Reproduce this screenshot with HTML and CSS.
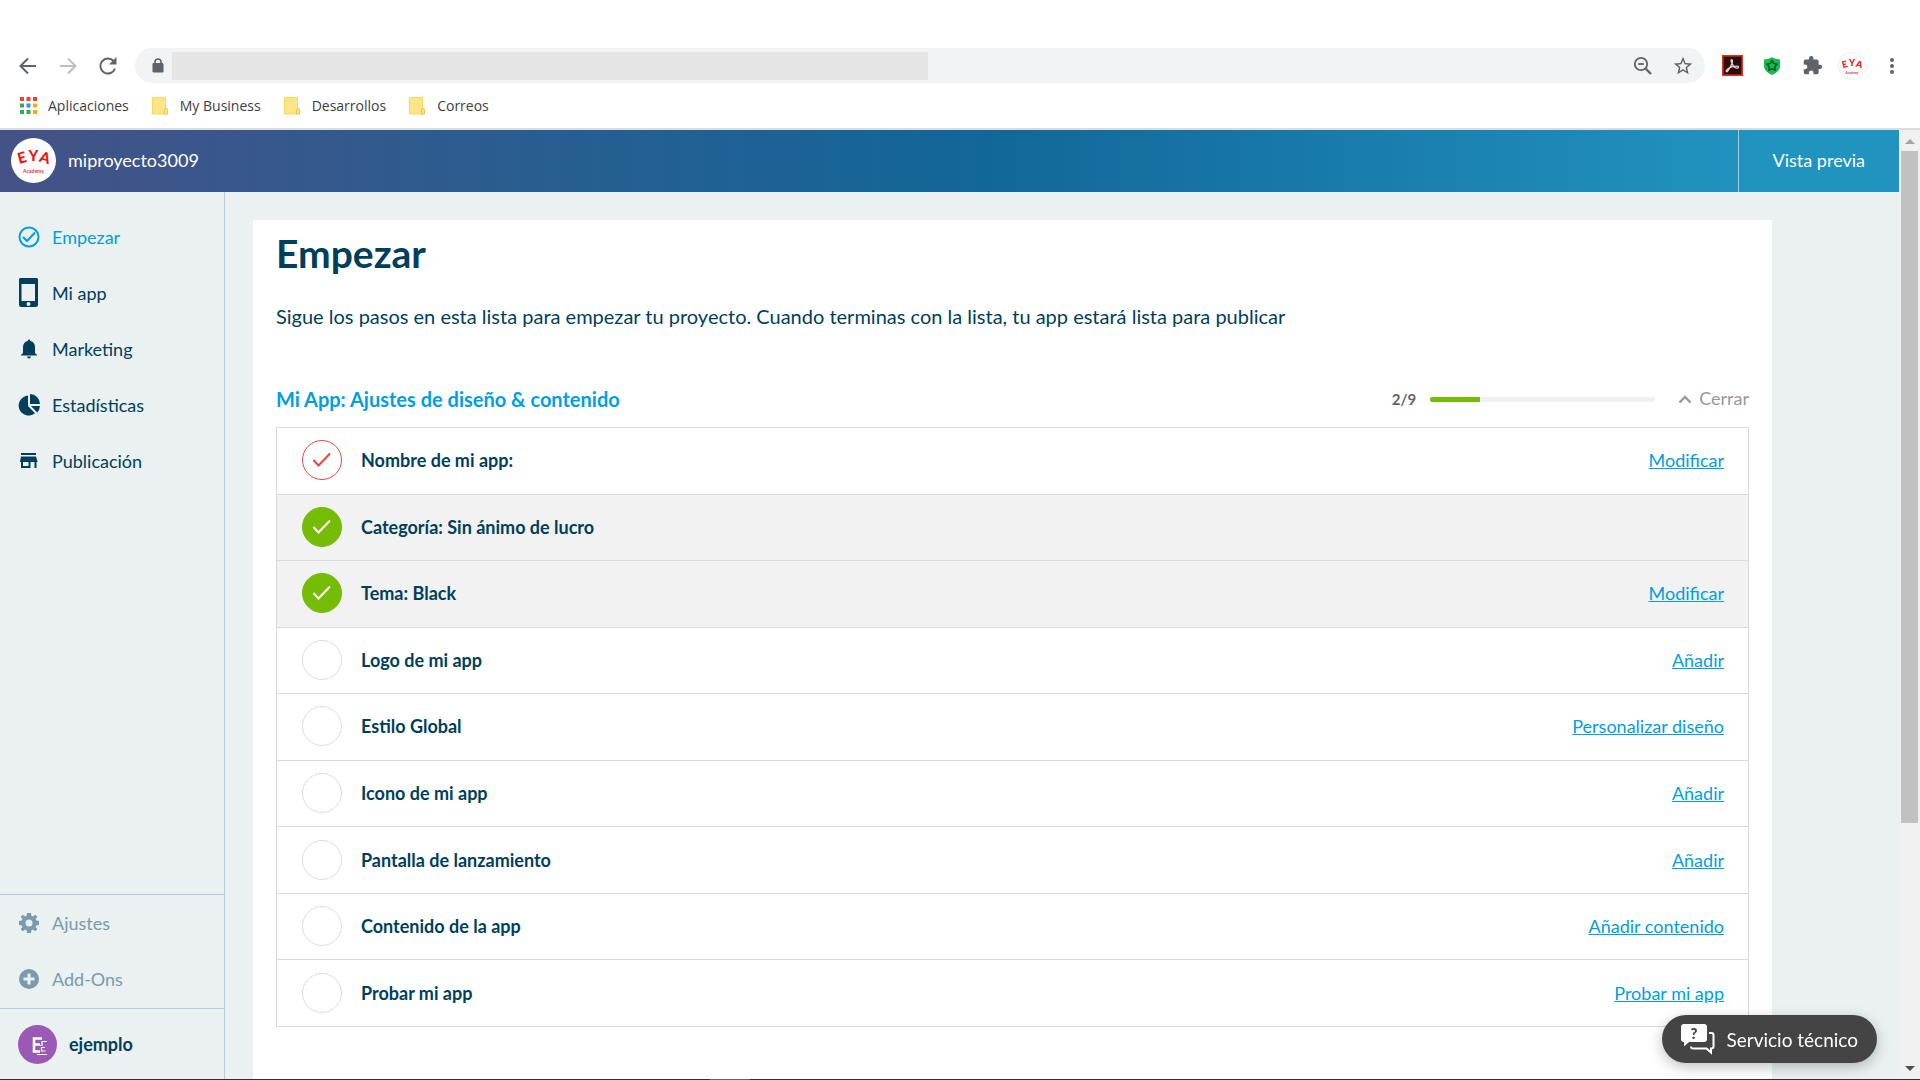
FILE: index.html
```html
<!DOCTYPE html>
<html lang="es">
<head>
<meta charset="utf-8">
<meta name="viewport" content="width=device-width, initial-scale=1">
<title>Empezar</title>
<link rel="stylesheet" href="styles.css">
</head>
<body>
<header class="browser">
  <div class="toolbar">
    <button class="tool" aria-label="Atrás"><svg width="20" height="20" viewBox="0 0 20 20" fill="none" stroke="#5f6368" stroke-width="2"><path d="M18 10H3M10 2.500L2.500 10l7.500 7.500"/></svg></button>
    <button class="tool" aria-label="Adelante"><svg width="20" height="20" viewBox="0 0 20 20" fill="none" stroke="#bdbfc1" stroke-width="2"><path d="M2 10h15M10 2.500L17.500 10 10 17.500"/></svg></button>
    <button class="tool" aria-label="Recargar"><svg width="20" height="20" viewBox="0 0 20 20"><path d="M17 12.500A7.500 7.500 0 1 1 15.500 5" fill="none" stroke="#5f6368" stroke-width="2"/><path d="M18.500 1v7.500H11z" fill="#5f6368"/></svg></button>
    <div class="omnibox">
      <svg class="lock" width="12" height="15" viewBox="0 0 12 15"><rect x="0.500" y="5" width="11" height="9.500" rx="1.200" fill="#5f6368"/><path d="M3 6V4a3 3 0 0 1 6 0v2" fill="none" stroke="#5f6368" stroke-width="1.600"/></svg>
      <input class="url" type="text" aria-label="Dirección">
      <button class="tool push" aria-label="Zoom"><svg width="20" height="20" viewBox="0 0 20 20" fill="none" stroke="#5f6368" stroke-width="1.800"><circle cx="8" cy="8" r="6.200"/><path d="M12.500 12.500L18 18" stroke-width="2.400"/><path d="M5.200 8h5.600"/></svg></button>
      <button class="tool" aria-label="Añadir a marcadores"><svg width="22" height="22" viewBox="0 0 24 24"><path fill="#5f6368" d="M22 9.240l-7.190-.620L12 2 9.190 8.630 2 9.240l5.460 4.730L5.820 21 12 17.270 18.180 21l-1.630-7.030L22 9.240zM12 15.400l-3.760 2.270 1-4.280-3.320-2.880 4.380-.380L12 6.100l1.710 4.040 4.380.380-3.320 2.880 1 4.280L12 15.400z"/></svg></button>
    </div>
    <button class="tool" aria-label="Acrobat"><svg width="21" height="21" viewBox="0 0 21 21"><rect x="0.800" y="0.800" width="19.400" height="19.400" fill="#2b0b0b" stroke="#e3321c" stroke-width="1.600"/><path d="M9.500 4.500c1.500 0 .9 2.500.6 4 .8 2.500 2.400 4 4 4.500 1.600.3 2.600-.3 2.500-1.200-.3-1.300-5-.5-7.500.3-2 .8-4.500 2.500-5 4-.1 1 1 1 2-.5 1.500-2.200 3.200-5.200 3.900-7.300C9 6.500 8.600 4.800 9.500 4.500z" fill="none" stroke="#ded8d6" stroke-width="1.200"/></svg></button>
    <button class="tool" aria-label="Protección"><svg width="16" height="18" viewBox="0 0 16 18"><path d="M0 2.500Q5 2 8 .3 11 2 16 2.500V10q-.5 4.500-8 8-7.500-3.500-8-8z" fill="#0fbf4f"/><path d="M8 3.500l1.700 3 3.300.7-2.200 2.500.3 3.400L8 11.800l-3.100 1.300.3-3.400L3 7.200l3.300-.7z" fill="none" stroke="#11442b" stroke-width="1.400"/></svg></button>
    <button class="tool" aria-label="Extensiones"><svg width="21" height="21" viewBox="0 0 24 24"><path fill="#5f6368" d="M20.500 11H19V7c0-1.100-.9-2-2-2h-4V3.500a2.500 2.500 0 0 0-5 0V5H4c-1.100 0-2 .9-2 2v3.800h1.500a2.700 2.700 0 0 1 0 5.400H2V20c0 1.100.9 2 2 2h3.800v-1.500a2.700 2.700 0 0 1 5.400 0V22H17c1.100 0 2-.9 2-2v-4h1.500a2.500 2.500 0 0 0 0-5z"/></svg></button>
    <button class="tool" aria-label="Perfil"><svg width="28" height="28" viewBox="0 0 45 45"><circle cx="22.500" cy="22.500" r="22" fill="#fff" stroke="#e4e4e4"/><g class="logo-letters"><text x="11" y="25" transform="rotate(-16 11 20)">E</text><text x="22.500" y="23">Y</text><text x="34" y="25" transform="rotate(16 34 20)">A</text></g><text class="logo-sub" x="22.500" y="35">Academy</text></svg></button>
    <button class="tool" aria-label="Menú"><svg width="6" height="18" viewBox="0 0 6 18" fill="#5f6368"><circle cx="3" cy="3" r="2"/><circle cx="3" cy="9" r="2"/><circle cx="3" cy="15" r="2"/></svg></button>
  </div>
  <nav class="bookmarks" aria-label="Marcadores">
    <a href="#"><svg width="17" height="17" viewBox="0 0 17 17"><path fill="#f04336" d="M0 0h4v4H0zM6.500 0h4v4h-4zM13 0h4v4h-4z"/><path fill="#34a853" d="M0 6.500h4v4H0zM0 13h4v4H0zM6.500 13h4v4h-4z"/><path fill="#2a94f4" d="M6.500 6.500h4v4h-4z"/><path fill="#fbab07" d="M13 6.500h4v4h-4zM13 13h4v4h-4z"/></svg>Aplicaciones</a>
    <a href="#"><svg width="17" height="18" viewBox="0 0 17 18"><path d="M.5.500h13v11h1.500v5.500H.5z" fill="#ffe48a" stroke="#fbd75b"/><path d="M12.500 17v-4q0-1.500 1.500-1.500t1.500 1.500v4z" fill="#ffe48a" stroke="#efc64a"/></svg>My Business</a>
    <a href="#"><svg width="17" height="18" viewBox="0 0 17 18"><path d="M.5.500h13v11h1.500v5.500H.5z" fill="#ffe48a" stroke="#fbd75b"/><path d="M12.500 17v-4q0-1.500 1.500-1.500t1.500 1.500v4z" fill="#ffe48a" stroke="#efc64a"/></svg>Desarrollos</a>
    <a href="#"><svg width="17" height="18" viewBox="0 0 17 18"><path d="M.5.500h13v11h1.500v5.500H.5z" fill="#ffe48a" stroke="#fbd75b"/><path d="M12.500 17v-4q0-1.500 1.500-1.500t1.500 1.500v4z" fill="#ffe48a" stroke="#efc64a"/></svg>Correos</a>
  </nav>
</header>

<div class="viewport">
  <div class="page">
    <header class="appbar">
      <svg class="logo" width="45" height="45" viewBox="0 0 45 45"><circle cx="22.500" cy="22.500" r="22.500" fill="#fff"/><g class="logo-letters"><text x="11" y="25" transform="rotate(-16 11 20)">E</text><text x="22.500" y="23">Y</text><text x="34" y="25" transform="rotate(16 34 20)">A</text></g><text class="logo-sub" x="22.500" y="35">Academy</text></svg>
      <span class="project">miproyecto3009</span>
      <a class="preview" href="#">Vista previa</a>
    </header>
    <div class="workspace">
      <aside class="sidebar">
        <nav class="menu">
          <a class="active" href="#"><svg width="22" height="22" viewBox="0 0 22 22" fill="none" stroke="currentColor" stroke-width="2"><circle cx="11" cy="11" r="9.500"/><path d="M5 11l4 4 8-8.500"/></svg>Empezar</a>
          <a href="#"><svg width="20" height="30" viewBox="0 0 20 30"><path fill="currentColor" fill-rule="evenodd" d="M2.500 0h14A2 2 0 0 1 19 2.500v24a2.500 2.500 0 0 1-2.500 2.500h-14A2.500 2.500 0 0 1 0 26.500v-24A2 2 0 0 1 2.500 0zM2.500 6v17h13.500V6zM9.500 24a2 2 0 1 0 0 4 2 2 0 0 0 0-4z"/></svg>Mi app</a>
          <a href="#"><svg width="20" height="20" viewBox="0 0 20 20"><path fill="currentColor" d="M10 0l1.500 2c3 .8 4.500 3 4.500 6v6l2 2v.500H2V16l2-2V8c0-3 1.500-5.200 4.500-6zM8 17.500h4q-.3 2-2 2t-2-2z"/></svg>Marketing</a>
          <a href="#"><svg width="22" height="22" viewBox="0 0 22 22" fill="currentColor"><path d="M10 1.500V12l7 7.200A10 10 0 1 1 10 1.500z"/><path d="M12 0a10 10 0 0 1 10 10H12z"/><path d="M13 12h9q-.3 4-2.800 6.500z"/></svg>Estadísticas</a>
          <a href="#"><svg width="20" height="18" viewBox="0 0 20 18"><path fill="currentColor" fill-rule="evenodd" d="M2 1h15v2H2zM2 4.500h15l1.500 5V10h-1v6h-2v-6h-4v6H2v-6H1v-.5zM4 10v4h5.500v-4z"/></svg>Publicación</a>
        </nav>
        <nav class="menu secondary">
          <a href="#"><svg width="20" height="20" viewBox="0 0 20 20"><path fill="currentColor" fill-rule="evenodd" d="M8 0h4l.4 2.800 1.500.6L16.200 1.700l2.100 2.100-1.700 2.300.6 1.500L20 8v4l-2.800.4-.6 1.500 1.700 2.300-2.100 2.100-2.300-1.700-1.500.6L12 20H8l-.4-2.800-1.500-.6-2.300 1.700-2.100-2.100 1.700-2.300-.6-1.500L0 12V8l2.800-.4.600-1.500-1.700-2.300 2.100-2.100 2.300 1.700 1.500-.6zM10 6.500a3.500 3.500 0 1 0 0 7 3.500 3.500 0 0 0 0-7z"/></svg>Ajustes</a>
          <a href="#"><svg width="20" height="20" viewBox="0 0 20 20"><circle cx="10" cy="10" r="10" fill="currentColor"/><path d="M10 4.500v11M4.500 10h11" stroke="#ebf1f1" stroke-width="3"/></svg>Add-Ons</a>
        </nav>
        <a class="account" href="#"><svg width="39" height="39" viewBox="0 0 39 39"><circle cx="19.500" cy="19.500" r="19.500" fill="#9b59b6"/><path d="M24 13.500h-8v13h6M16 19.500h6" fill="none" stroke="#fff" stroke-width="2.600"/><path d="M29 16.500h-5v4h-2M27 22.500h-3.500v3.500h4M19 29.500h10" fill="none" stroke="#fff" stroke-width="1.200"/></svg>ejemplo</a>
      </aside>
      <main class="content">
        <section class="card">
          <h1>Empezar</h1>
          <p class="intro">Sigue los pasos en esta lista para empezar tu proyecto. Cuando terminas con la lista, tu app estará lista para publicar</p>
          <div class="section-head">
            <h2>Mi App: Ajustes de diseño &amp; contenido</h2>
            <label class="count" for="progress">2/9</label>
            <progress id="progress" value="2" max="9"></progress>
            <button class="toggle"><svg width="14" height="10" viewBox="0 0 14 10" fill="none" stroke="currentColor" stroke-width="2.400"><path d="M1.500 9.500L7 4l5.500 5.500"/></svg>Cerrar</button>
          </div>
          <ul class="steps">
            <li><span class="mark error"><svg width="20" height="16" viewBox="0 0 20 16"><path d="M1.500 8l5 5.500L18 1.500"/></svg></span><span class="name">Nombre de mi app:</span><a href="#">Modificar</a></li>
            <li class="done"><span class="mark ok"><svg width="20" height="16" viewBox="0 0 20 16"><path d="M1.500 8l5 5.500L18 1.500"/></svg></span><span class="name">Categoría: Sin ánimo de lucro</span></li>
            <li class="done"><span class="mark ok"><svg width="20" height="16" viewBox="0 0 20 16"><path d="M1.500 8l5 5.500L18 1.500"/></svg></span><span class="name">Tema: Black</span><a href="#">Modificar</a></li>
            <li><span class="mark"></span><span class="name">Logo de mi app</span><a href="#">Añadir</a></li>
            <li><span class="mark"></span><span class="name">Estilo Global</span><a href="#">Personalizar diseño</a></li>
            <li><span class="mark"></span><span class="name">Icono de mi app</span><a href="#">Añadir</a></li>
            <li><span class="mark"></span><span class="name">Pantalla de lanzamiento</span><a href="#">Añadir</a></li>
            <li><span class="mark"></span><span class="name">Contenido de la app</span><a href="#">Añadir contenido</a></li>
            <li><span class="mark"></span><span class="name">Probar mi app</span><a href="#">Probar mi app</a></li>
          </ul>
        </section>
      </main>
    </div>
  </div>
  <div class="scrollbar" aria-hidden="true">
    <svg width="10" height="5" viewBox="0 0 10 5"><path d="M0 5l5-5 5 5z" fill="#a3a3a3"/></svg>
    <div class="track"><div class="thumb"></div></div>
    <svg width="10" height="5" viewBox="0 0 10 5"><path d="M0 0l5 5 5-5z" fill="#505050"/></svg>
  </div>
</div>
<div class="taskbar"><span></span></div>

<button class="support"><svg width="34" height="31" viewBox="0 0 34 31"><path d="M3 0h20a3 3 0 0 1 3 3v12a3 3 0 0 1-3 3H8l-5 4.500V18a3 3 0 0 1-3-3V3a3 3 0 0 1 3-3z" fill="#fff"/><path d="M28 9h2.500a2 2 0 0 1 2 2v11.500a2 2 0 0 1-2 2H30v4l-4.500-4H12a2 2 0 0 1-2-2" fill="none" stroke="#fff" stroke-width="2"/><text class="support-mark" x="13" y="15">?</text></svg>Servicio técnico</button>
</body>
</html>
```
FILE: styles.css
```css
* { box-sizing: border-box; }

body {
  margin: 0;
  min-height: 100vh;
  display: flex;
  flex-direction: column;
  font-family: Lato, "Open Sans", sans-serif;
  font-size: 18px;
  color: #003f5c;
  background: #fff;
}

a { color: inherit; text-decoration: none; }
svg { flex: none; display: block; }

button {
  border: 0;
  padding: 0;
  background: none;
  font: inherit;
  cursor: pointer;
}

/* Browser frame */
.browser {
  padding-top: 48px;
  border-bottom: 2px solid #dadce0;
}

.toolbar {
  display: flex;
  align-items: center;
  padding: 0 8px;
}

.tool {
  flex: none;
  width: 40px;
  height: 35px;
  display: flex;
  align-items: center;
  justify-content: center;
}

.omnibox {
  flex: 1;
  min-width: 0;
  height: 35px;
  margin: 0 7px;
  padding: 0 2px 0 17px;
  display: flex;
  align-items: center;
  border-radius: 18px;
  background: #f1f3f4;
}

.url {
  flex: 0 1 756px;
  min-width: 0;
  height: 28px;
  margin-left: 8px;
  padding: 0 8px;
  border: 0;
  background: #e5e5e5;
}

.push { margin-left: auto; }

.bookmarks {
  display: flex;
  align-items: center;
  gap: 23px;
  height: 45px;
  padding-left: 20px;
  font-family: "Open Sans", sans-serif;
  font-size: 14px;
  color: #3c4043;
}

.bookmarks a {
  display: flex;
  align-items: center;
  gap: 11px;
}

.logo-letters text {
  font: 900 15px Lato, sans-serif;
  fill: #f01418;
  text-anchor: middle;
}

.logo-sub {
  font: 900 5px Lato, sans-serif;
  fill: #e8474a;
  text-anchor: middle;
}

/* Web page area */
.viewport {
  flex: 1;
  display: flex;
}

.page {
  flex: 1;
  min-width: 0;
  display: flex;
  flex-direction: column;
}

.appbar {
  display: flex;
  align-items: center;
  height: 62px;
  padding: 0 0 1px 11px;
  color: #fff;
  background: linear-gradient(90deg, #445287, #126799 52%, #2193bf 92%);
}

.project {
  margin-left: 12px;
  padding-bottom: 1px;
}

.preview {
  align-self: stretch;
  display: flex;
  align-items: center;
  margin: 0 0 -1px auto;
  padding: 0 34px 2px;
  border-left: 1px solid #9fcfe3;
}

.workspace {
  flex: 1;
  display: flex;
  background: #ebf1f1;
}

.sidebar {
  flex: none;
  width: 225px;
  display: flex;
  flex-direction: column;
  padding-top: 17px;
  border-right: 1px solid #b9cdd5;
}

.menu a {
  display: grid;
  grid-template-columns: 24px auto;
  justify-content: start;
  justify-items: center;
  align-items: center;
  gap: 11px;
  height: 56px;
  padding-left: 17px;
}

.menu .active { color: #009fdf; }

.secondary {
  margin-top: auto;
  padding-bottom: 1px;
  border-top: 1px solid #b9cdd5;
  color: #789bae;
}

.account {
  display: flex;
  align-items: center;
  gap: 12px;
  height: 71px;
  padding-left: 18px;
  border-top: 1px solid #b9cdd5;
  font-weight: 700;
}

.content {
  flex: 1;
  min-width: 0;
  display: flex;
  padding: 28px 127px 0 28px;
}

.card {
  flex: 1;
  min-width: 0;
  padding: 9px 23px;
  background: #fff;
}

h1 {
  margin: 0;
  font-size: 39px;
  line-height: 48px;
}

.intro {
  margin: 25px 0 53px;
  font-size: 20px;
  line-height: 28px;
}

.section-head {
  display: flex;
  align-items: center;
  height: 32px;
  margin-bottom: 12px;
}

h2 {
  margin: 0 auto 0 0;
  font-size: 20px;
  color: #009fdf;
}

.count {
  font-size: 15px;
  font-weight: 700;
  color: #666;
}

progress {
  appearance: none;
  width: 225px;
  height: 5px;
  margin: 0 23px 0 14px;
  border: 0;
  border-radius: 2px;
  overflow: hidden;
}

progress::-webkit-progress-bar { background: #f0f0f0; }
progress::-webkit-progress-value { background: #74bd04; }

.toggle {
  display: flex;
  align-items: center;
  gap: 7px;
  padding-bottom: 3px;
  color: #999;
}

.steps {
  display: grid;
  grid-auto-rows: 1fr;
  min-height: 600px;
  margin: 0;
  padding: 0;
  list-style: none;
  border: 1px solid #d9dadb;
  border-top: 0;
}

.steps li {
  display: flex;
  align-items: center;
  gap: 19px;
  padding: 0 24px 1px 25px;
  border-top: 1px solid #d9dadb;
}

.steps .done { background: #f2f2f2; }

.mark {
  flex: none;
  display: grid;
  place-items: center;
  width: 40px;
  height: 40px;
  border: 1px solid #dcdddd;
  border-radius: 50%;
}

.mark path { fill: none; stroke: currentColor; stroke-width: 2; }
.error { color: #e8483a; border-color: currentColor; }
.ok { color: #fff; background: #74bd04; border-color: #74bd04; }

.name {
  flex: 1;
  font-weight: 700;
}

.steps a {
  color: #009fdf;
  text-decoration: underline;
}

/* Scrollbar of the web page */
.scrollbar {
  flex: none;
  width: 21px;
  display: flex;
  flex-direction: column;
  align-items: center;
  gap: 7px;
  padding: 9px 0 8px;
  background: #f0f0f0;
}

.track { flex: 1; width: 17px; }

.thumb {
  height: 74%;
  background: #c1c1c1;
}

.taskbar {
  height: 1px;
  padding-left: 37%;
  background: #2e3032;
}

.taskbar span {
  display: block;
  width: 40px;
  height: 1px;
  background: #666;
}

.support {
  position: fixed;
  right: 43px;
  bottom: 17px;
  display: flex;
  align-items: center;
  gap: 11px;
  height: 48px;
  padding: 0 19px;
  border-radius: 24px;
  font-size: 19px;
  color: #fff;
  background: #444;
  box-shadow: 0 4px 14px rgba(0, 0, 0, 0.25);
}

.support-mark {
  font: 900 15px Lato, sans-serif;
  fill: #444;
  text-anchor: middle;
}
```
